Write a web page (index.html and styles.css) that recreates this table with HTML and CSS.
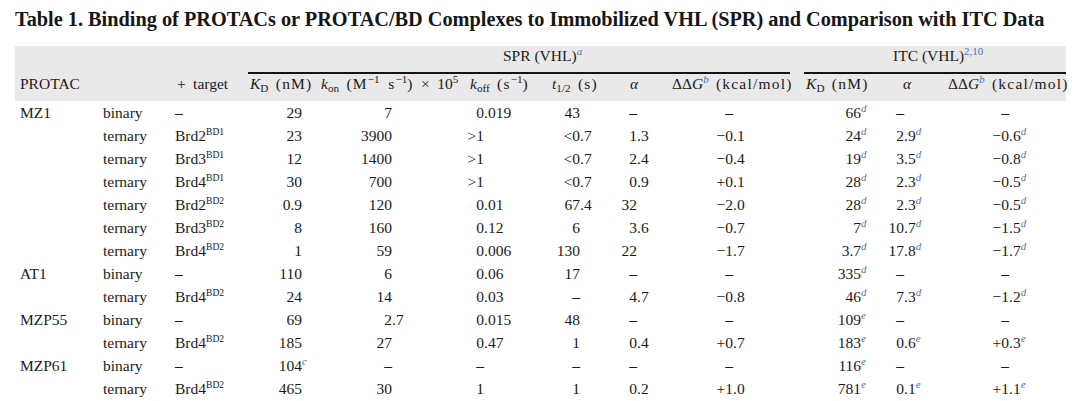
FILE: index.html
```html
<!DOCTYPE html>
<html>
<head>
<meta charset="utf-8">
<link rel="stylesheet" href="styles.css">
</head>
<body>
<h1 class="title">Table 1. Binding of PROTACs or PROTAC/BD Complexes to Immobilized VHL (SPR) and Comparison with ITC Data</h1>
<table class="tbl">
  <colgroup>
    <col class="w85"><col class="w72"><col class="w73"><col class="w73"><col class="w148"><col class="w74">
    <col class="w72"><col class="w48"><col class="w141"><col class="w79"><col class="w55"><col class="w131">
  </colgroup>
  <thead>
    <tr class="r1">
      <th colspan="3"></th>
      <th colspan="6"><div class="grp grp-spr">SPR (VHL)<sup class="ref">a</sup></div></th>
      <th colspan="3"><div class="grp grp-itc">ITC (VHL)<sup class="ref up">2,10</sup></div></th>
    </tr>
    <tr class="r2">
      <th class="h1">PROTAC</th>
      <th></th>
      <th class="h3">+ target</th>
      <th class="h4"><i>K</i><sub>D</sub> <span class="u">(nM)</span></th>
      <th class="h5"><i>k</i><sub>on</sub> <span class="u">(M<sup class="ex">−1</sup> s<sup class="ex">−1</sup>)</span> × 10<sup class="ex">5</sup></th>
      <th class="h6"><i>k</i><sub>off</sub> <span class="u">(s<sup class="ex">−1</sup>)</span></th>
      <th class="h7"><i>t</i><sub>1/2</sub> <span class="u">(s)</span></th>
      <th class="h8"><i>α</i></th>
      <th class="h9">ΔΔ<i>G</i><sup class="ref">b</sup> <span class="u">(kcal/mol)</span></th>
      <th class="h10"><i>K</i><sub>D</sub> <span class="u">(nM)</span></th>
      <th class="h11"><i>α</i></th>
      <th class="h12">ΔΔ<i>G</i><sup class="ref">b</sup> <span class="u">(kcal/mol)</span></th>
    </tr>
  </thead>
  <tbody>
    <tr><td>MZ1</td><td>binary</td><td><b class="dash">–</b></td><td><span class="ip">29</span></td><td><span class="ip">7</span></td><td><span class="ip">0</span>.019</td><td><span class="ip">43</span></td><td><span class="ip"><b class="dash">–</b></span></td><td><span class="ip"><b class="dash">–</b></span></td><td><span class="ip">66</span><sup class="ref">d</sup></td><td><span class="ip"><b class="dash">–</b></span></td><td><span class="ip"><b class="dash">–</b></span></td></tr>
    <tr><td></td><td>ternary</td><td>Brd2<sup class="bd">BD1</sup></td><td><span class="ip">23</span></td><td><span class="ip">3900</span></td><td><span class="ip">&gt;1</span></td><td><span class="ip">&lt;0</span>.7</td><td><span class="ip">1</span>.3</td><td><span class="ip">−0</span>.1</td><td><span class="ip">24</span><sup class="ref">d</sup></td><td><span class="ip">2</span>.9<sup class="ref">d</sup></td><td><span class="ip">−0</span>.6<sup class="ref">d</sup></td></tr>
    <tr><td></td><td>ternary</td><td>Brd3<sup class="bd">BD1</sup></td><td><span class="ip">12</span></td><td><span class="ip">1400</span></td><td><span class="ip">&gt;1</span></td><td><span class="ip">&lt;0</span>.7</td><td><span class="ip">2</span>.4</td><td><span class="ip">−0</span>.4</td><td><span class="ip">19</span><sup class="ref">d</sup></td><td><span class="ip">3</span>.5<sup class="ref">d</sup></td><td><span class="ip">−0</span>.8<sup class="ref">d</sup></td></tr>
    <tr><td></td><td>ternary</td><td>Brd4<sup class="bd">BD1</sup></td><td><span class="ip">30</span></td><td><span class="ip">700</span></td><td><span class="ip">&gt;1</span></td><td><span class="ip">&lt;0</span>.7</td><td><span class="ip">0</span>.9</td><td><span class="ip">+0</span>.1</td><td><span class="ip">28</span><sup class="ref">d</sup></td><td><span class="ip">2</span>.3<sup class="ref">d</sup></td><td><span class="ip">−0</span>.5<sup class="ref">d</sup></td></tr>
    <tr><td></td><td>ternary</td><td>Brd2<sup class="bd">BD2</sup></td><td><span class="ip">0.9</span></td><td><span class="ip">120</span></td><td><span class="ip">0</span>.01</td><td><span class="ip">67</span>.4</td><td><span class="ip">32</span></td><td><span class="ip">−2</span>.0</td><td><span class="ip">28</span><sup class="ref">d</sup></td><td><span class="ip">2</span>.3<sup class="ref">d</sup></td><td><span class="ip">−0</span>.5<sup class="ref">d</sup></td></tr>
    <tr><td></td><td>ternary</td><td>Brd3<sup class="bd">BD2</sup></td><td><span class="ip">8</span></td><td><span class="ip">160</span></td><td><span class="ip">0</span>.12</td><td><span class="ip">6</span></td><td><span class="ip">3</span>.6</td><td><span class="ip">−0</span>.7</td><td><span class="ip">7</span><sup class="ref">d</sup></td><td><span class="ip">10</span>.7<sup class="ref">d</sup></td><td><span class="ip">−1</span>.5<sup class="ref">d</sup></td></tr>
    <tr><td></td><td>ternary</td><td>Brd4<sup class="bd">BD2</sup></td><td><span class="ip">1</span></td><td><span class="ip">59</span></td><td><span class="ip">0</span>.006</td><td><span class="ip">130</span></td><td><span class="ip">22</span></td><td><span class="ip">−1</span>.7</td><td><span class="ip">3.7</span><sup class="ref">d</sup></td><td><span class="ip">17</span>.8<sup class="ref">d</sup></td><td><span class="ip">−1</span>.7<sup class="ref">d</sup></td></tr>
    <tr><td>AT1</td><td>binary</td><td><b class="dash">–</b></td><td><span class="ip">110</span></td><td><span class="ip">6</span></td><td><span class="ip">0</span>.06</td><td><span class="ip">17</span></td><td><span class="ip"><b class="dash">–</b></span></td><td><span class="ip"><b class="dash">–</b></span></td><td><span class="ip">335</span><sup class="ref">d</sup></td><td><span class="ip"><b class="dash">–</b></span></td><td><span class="ip"><b class="dash">–</b></span></td></tr>
    <tr><td></td><td>ternary</td><td>Brd4<sup class="bd">BD2</sup></td><td><span class="ip">24</span></td><td><span class="ip">14</span></td><td><span class="ip">0</span>.03</td><td><span class="ip"><b class="dash">–</b></span></td><td><span class="ip">4</span>.7</td><td><span class="ip">−0</span>.8</td><td><span class="ip">46</span><sup class="ref">d</sup></td><td><span class="ip">7</span>.3<sup class="ref">d</sup></td><td><span class="ip">−1</span>.2<sup class="ref">d</sup></td></tr>
    <tr><td>MZP55</td><td>binary</td><td><b class="dash">–</b></td><td><span class="ip">69</span></td><td><span class="ip">2</span>.7</td><td><span class="ip">0</span>.015</td><td><span class="ip">48</span></td><td><span class="ip"><b class="dash">–</b></span></td><td><span class="ip"><b class="dash">–</b></span></td><td><span class="ip">109</span><sup class="ref">e</sup></td><td><span class="ip"><b class="dash">–</b></span></td><td><span class="ip"><b class="dash">–</b></span></td></tr>
    <tr><td></td><td>ternary</td><td>Brd4<sup class="bd">BD2</sup></td><td><span class="ip">185</span></td><td><span class="ip">27</span></td><td><span class="ip">0</span>.47</td><td><span class="ip">1</span></td><td><span class="ip">0</span>.4</td><td><span class="ip">+0</span>.7</td><td><span class="ip">183</span><sup class="ref">e</sup></td><td><span class="ip">0</span>.6<sup class="ref">e</sup></td><td><span class="ip">+0</span>.3<sup class="ref">e</sup></td></tr>
    <tr><td>MZP61</td><td>binary</td><td><b class="dash">–</b></td><td><span class="ip">104</span><sup class="ref">c</sup></td><td><span class="ip"><b class="dash">–</b></span></td><td><span class="ip"><b class="dash">–</b></span></td><td><span class="ip"><b class="dash">–</b></span></td><td><span class="ip"><b class="dash">–</b></span></td><td><span class="ip"><b class="dash">–</b></span></td><td><span class="ip">116</span><sup class="ref">e</sup></td><td><span class="ip"><b class="dash">–</b></span></td><td><span class="ip"><b class="dash">–</b></span></td></tr>
    <tr><td></td><td>ternary</td><td>Brd4<sup class="bd">BD2</sup></td><td><span class="ip">465</span></td><td><span class="ip">30</span></td><td><span class="ip">1</span></td><td><span class="ip">1</span></td><td><span class="ip">0</span>.2</td><td><span class="ip">+1</span>.0</td><td><span class="ip">781</span><sup class="ref">e</sup></td><td><span class="ip">0</span>.1<sup class="ref">e</sup></td><td><span class="ip">+1</span>.1<sup class="ref">e</sup></td></tr>
  </tbody>
</table>
</body>
</html>
```

FILE: styles.css
```css
html, body {
  margin: 0;
  padding: 0;
  background: #ffffff;
}

body {
  font-family: "Liberation Serif", "Times New Roman", serif;
  color: #1b1b1b;
}

.title {
  margin: 7px 0 0 15px;
  font-size: 20.3px;
  line-height: 24px;
  font-weight: bold;
  color: #161616;
  white-space: nowrap;
}

.tbl {
  margin: 15px 0 0 15px;
  width: 1051px;
  table-layout: fixed;
  border-collapse: collapse;
  border-spacing: 0;
  font-size: 15.5px;
}

.w85 { width: 85px; }
.w72 { width: 72px; }
.w73 { width: 73px; }
.w148 { width: 148px; }
.w74 { width: 74px; }
.w48 { width: 48px; }
.w141 { width: 141px; }
.w79 { width: 79px; }
.w55 { width: 55px; }
.w131 { width: 131px; }

.tbl th,
.tbl td {
  padding: 0;
  font-weight: normal;
  text-align: left;
  white-space: nowrap;
  vertical-align: top;
}

.tbl thead {
  background: #e9e9e9;
}

.r1 th {
  line-height: 20px;
}

.grp {
  border-bottom: 2px solid #141414;
  padding-bottom: 6px;
}

.grp-spr {
  margin: 0 11px 0 3px;
  padding-left: 255px;
}

.grp-itc {
  margin: 0 0 0 3px;
  padding-left: 89px;
}

.r2 th {
  line-height: 20px;
  padding-bottom: 7px;
  word-spacing: 3.5px;
}

.u {
  letter-spacing: 1.2px;
}

.r2 .h1 { padding-left: 5px; }
.r2 .h3 { padding-left: 5px; }
.r2 .h4 { padding-left: 5px; }
.r2 .h5 { padding-left: 3px; }
.r2 .h6 { padding-left: 4px; }
.r2 .h7 { padding-left: 12px; }
.r2 .h8 { padding-left: 18px; }
.r2 .h9 { padding-left: 12px; }
.r2 .h10 { padding-left: 5px; }
.r2 .h11 { padding-left: 23px; }
.r2 .h12 { padding-left: 13px; }

.tbl sub {
  font-size: 0.72em;
  line-height: 0;
  vertical-align: -0.25em;
  letter-spacing: 0;
}

.tbl sup {
  line-height: 0;
}

.ex {
  font-size: 0.72em;
  vertical-align: 0.5em;
  letter-spacing: 0;
}

.ref {
  font-size: 0.7em;
  font-style: italic;
  color: #4a72b0;
  vertical-align: 0.55em;
  letter-spacing: 0;
}

.ref.up {
  font-style: normal;
}

.bd {
  font-size: 0.62em;
  vertical-align: 0.6em;
}

.dash {
  font-weight: bold;
}

tbody td {
  line-height: 23px;
}

tbody td:nth-child(1) { padding-left: 5px; }
tbody td:nth-child(2) { padding-left: 3px; }
tbody td:nth-child(3) { padding-left: 3px; }

.ip {
  display: inline-block;
  text-align: right;
}

tbody td:nth-child(4) .ip { width: 57px; }
tbody td:nth-child(5) .ip { width: 74px; }
tbody td:nth-child(6) .ip { width: 18px; }
tbody td:nth-child(7) .ip { width: 40px; }
tbody td:nth-child(8) .ip { width: 25px; }
tbody td:nth-child(9) .ip { width: 73px; }
tbody td:nth-child(10) .ip { width: 60px; }
tbody td:nth-child(11) .ip { width: 24px; }
tbody td:nth-child(12) .ip { width: 74px; }
```
